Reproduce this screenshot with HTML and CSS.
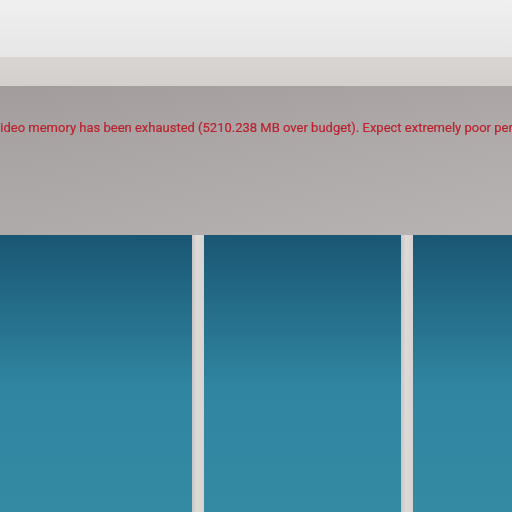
FILE: index.html
```html
<!DOCTYPE html>
<html>
<head>
<meta charset="utf-8">
<link rel="stylesheet" href="styles.css">
</head>
<body>
<div class="scene">
  <div class="sky"></div>
  <div class="ledge"></div>
  <div class="wall">
    <p class="warn">Video memory has been exhausted (5210.238 MB over budget). Expect extremely poor performance.</p>
  </div>
  <div class="panels">
    <div class="panel p1"></div>
    <div class="post"></div>
    <div class="panel p2"></div>
    <div class="post"></div>
    <div class="panel p3"></div>
  </div>
</div>
</body>
</html>
```
FILE: styles.css
```css
html, body {
  margin: 0;
  padding: 0;
  width: 512px;
  height: 512px;
  overflow: hidden;
  background: #e8e8e8;
}
.scene {
  display: flex;
  flex-direction: column;
  width: 512px;
  height: 512px;
}
.sky {
  height: 57px;
  background: linear-gradient(180deg, #f0f0f0 0%, #e6e6e6 100%);
}
.ledge {
  height: 29px;
  background: linear-gradient(180deg, #d9d6d3 0%, #d2cfcc 100%);
}
.wall {
  height: 149px;
  background:
    linear-gradient(90deg, rgba(0,0,0,0.03) 0%, rgba(255,255,255,0.04) 100%),
    linear-gradient(180deg, #a8a1a2 0%, #afaaaa 50%, #b4b0b0 100%);
  overflow: hidden;
}
.warn {
  margin: 0 0 0 -8px;
  padding-top: 34px;
  white-space: nowrap;
  font-family: Roboto, "Liberation Sans", sans-serif;
  font-size: 13px;
  line-height: 16px;
  color: #c42430;
  filter: blur(0.45px);
  -webkit-text-stroke: 0.2px #a01f28;
}
.panels {
  flex: 1;
  display: flex;
}
.panel {
  background: linear-gradient(180deg, #1a5674 0%, #246c88 25%, #3085a0 55%, #3489a3 100%);
}
.p1 { width: 192px; }
.p2 { width: 197px; }
.p3 { flex: 1; }
.post {
  width: 12px;
  background: linear-gradient(90deg, #c9c5c4 0%, #dedad8 40%, #d6d2d0 100%);
}
```
